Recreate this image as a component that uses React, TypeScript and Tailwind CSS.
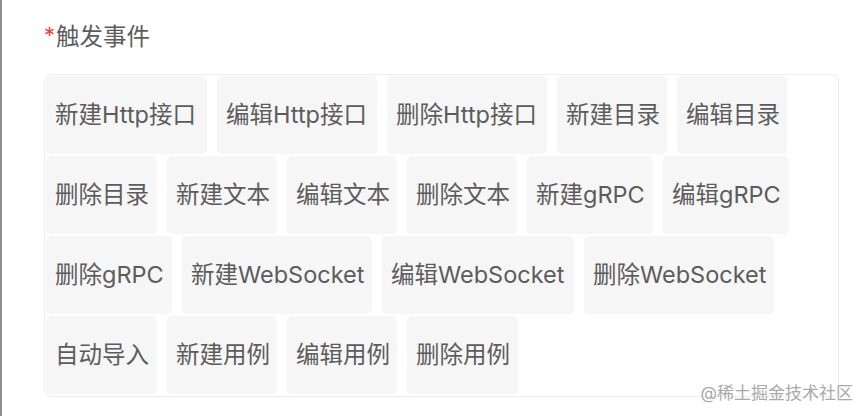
import React from "react";

const rows: { label: string; w: string }[] = [
  { label: "新建Http接口", w: "w-[161px]" },
  { label: "编辑Http接口", w: "w-[160px]" },
  { label: "删除Http接口", w: "w-[160px]" },
  { label: "新建目录", w: "w-[110px]" },
  { label: "编辑目录", w: "w-[110px]" },
  { label: "删除目录", w: "w-[111px]" },
  { label: "新建文本", w: "w-[110px]" },
  { label: "编辑文本", w: "w-[110px]" },
  { label: "删除文本", w: "w-[110px]" },
  { label: "新建gRPC", w: "w-[126px]" },
  { label: "编辑gRPC", w: "w-[126px]" },
  { label: "删除gRPC", w: "w-[126px]" },
  { label: "新建WebSocket", w: "w-[190px]" },
  { label: "编辑WebSocket", w: "w-[192px]" },
  { label: "删除WebSocket", w: "w-[190px]" },
  { label: "自动导入", w: "w-[111px]" },
  { label: "新建用例", w: "w-[110px]" },
  { label: "编辑用例", w: "w-[110px]" },
  { label: "删除用例", w: "w-[111px]" },
];

export default function App() {
  return (
    <div
      className="relative h-[416px] w-[868px] overflow-hidden border-l-[2px] border-[#8e8e8e] bg-white"
      style={{ fontFamily: 'Inter, "Noto Sans CJK SC", sans-serif' }}
    >
      <div className="pl-[42px] pt-[21px]">
        <div className="flex h-[32px] items-center text-[23.5px] leading-[32px] text-[#5c5c5c]">
          <span className="mt-[-4px] mr-[1px] text-[22px] leading-[20px] text-[#e8453c]">*</span>
          <span>触发事件</span>
        </div>
        <div className="mt-[21px] flex w-[795px] flex-wrap gap-x-[10px] gap-y-[2px] rounded-[8px] border border-[#ececec] bg-white px-[1px] pt-[1px] pb-[2px]">
          {rows.map((r) => (
            <div
              key={r.label}
              className={`flex h-[78px] items-center rounded-[5px] bg-[#f6f6f6] pl-[9px] text-[23.5px] whitespace-nowrap text-[#5c5c5c] ${r.w}`}
            >
              {r.label}
            </div>
          ))}
        </div>
      </div>
      <div className="absolute right-[15px] bottom-[12px] text-[17px] leading-[22px] text-[#a9a9a9]">
        @稀土掘金技术社区
      </div>
    </div>
  );
}
